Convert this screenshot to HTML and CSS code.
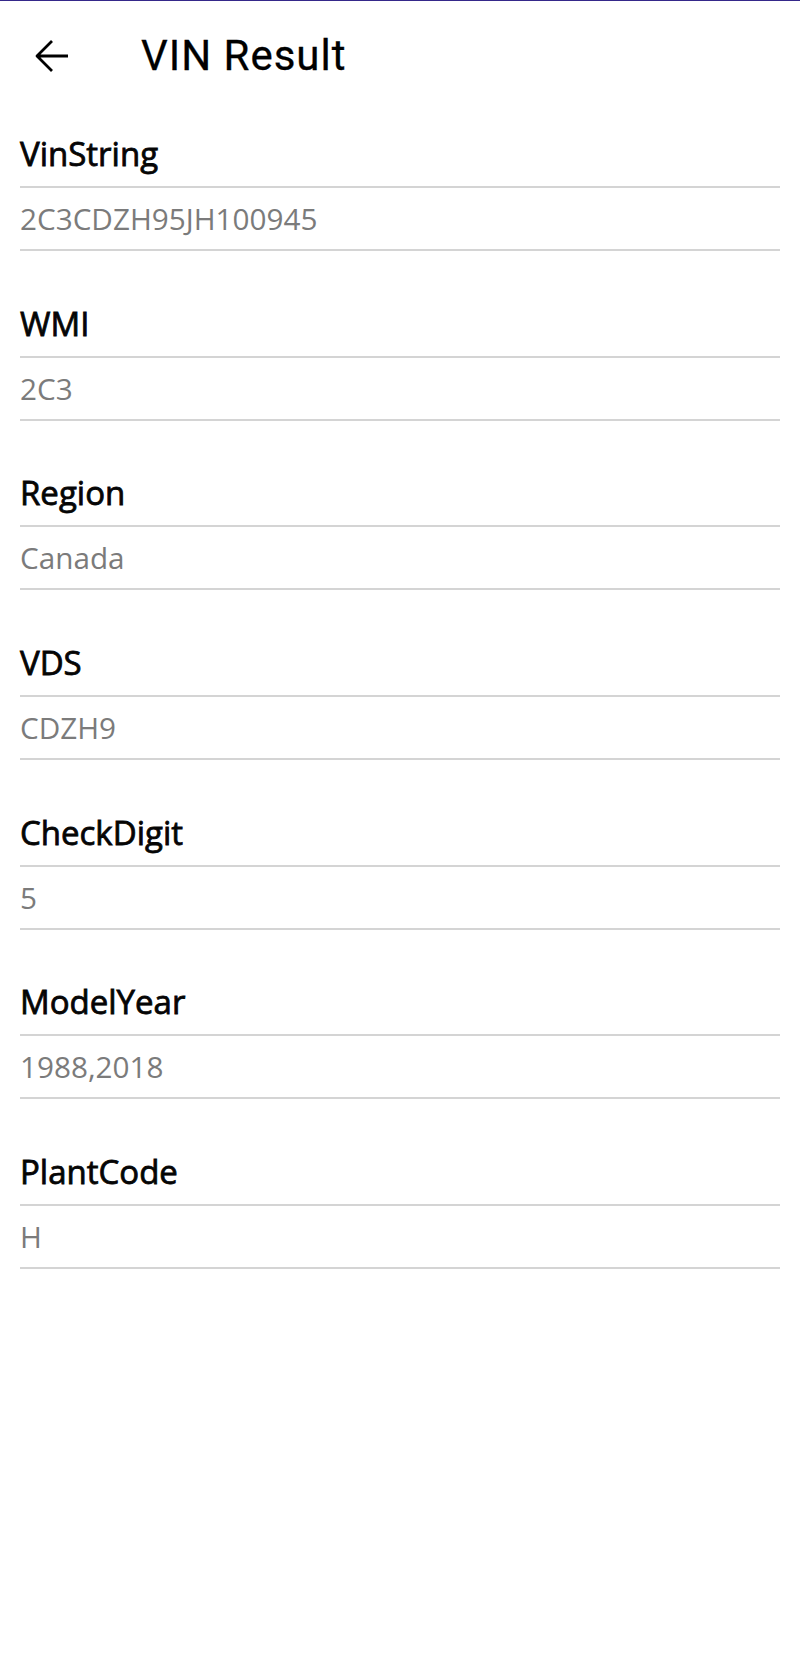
FILE: index.html
```html
<!DOCTYPE html>
<html lang="en">
<head>
<meta charset="utf-8">
<title>VIN Result</title>
<link rel="stylesheet" href="styles.css">
</head>
<body>
<div class="app">
  <header class="header">
    <span class="back">
      <svg width="48" height="48" viewBox="0 0 24 24" aria-hidden="true">
        <path d="M4.6 12H20M12 4.5L4.5 12L12 19.5" fill="none" stroke="#000" stroke-width="1.4" stroke-linejoin="round"/>
      </svg>
    </span>
    <h1 class="title">VIN Result</h1>
  </header>
  <main class="fields">
    <div class="field"><div class="label">VinString</div><div class="value">2C3CDZH95JH100945</div></div>
    <div class="field"><div class="label">WMI</div><div class="value">2C3</div></div>
    <div class="field"><div class="label">Region</div><div class="value">Canada</div></div>
    <div class="field"><div class="label">VDS</div><div class="value">CDZH9</div></div>
    <div class="field"><div class="label">CheckDigit</div><div class="value">5</div></div>
    <div class="field"><div class="label">ModelYear</div><div class="value">1988,2018</div></div>
    <div class="field"><div class="label">PlantCode</div><div class="value">H</div></div>
  </main>
</div>
</body>
</html>
```
FILE: styles.css
```css
html, body {
  margin: 0;
  padding: 0;
  background: #ffffff;
}

.app {
  border-top: 1px solid #35288a;
  min-height: 1666px;
  font-family: "Open Sans", "Noto Sans", sans-serif;
}

.header {
  height: 110px;
  display: flex;
  align-items: center;
  padding-left: 28px;
}

.back {
  width: 48px;
  height: 48px;
  display: flex;
}

.title {
  margin: 0 0 0 65px;
  font-family: Roboto, "Noto Sans", sans-serif;
  font-weight: 400;
  font-size: 42px;
  line-height: 48px;
  letter-spacing: 1px;
  color: #000;
  -webkit-text-stroke: 0.3px #000;
}

.fields {
  display: flex;
  flex-direction: column;
  gap: 50.7px;
  padding: 21px 20px 0;
}

.label {
  font-size: 33px;
  font-weight: 400;
  line-height: 44px;
  color: #050505;
  -webkit-text-stroke: 0.8px #050505;
  padding-bottom: 10px;
  border-bottom: 2px solid #d4d4d4;
}

.value {
  font-size: 29.7px;
  line-height: 40px;
  color: #7b7b7b;
  padding-top: 11px;
  padding-bottom: 10px;
  border-bottom: 2px solid #d4d4d4;
}
```
